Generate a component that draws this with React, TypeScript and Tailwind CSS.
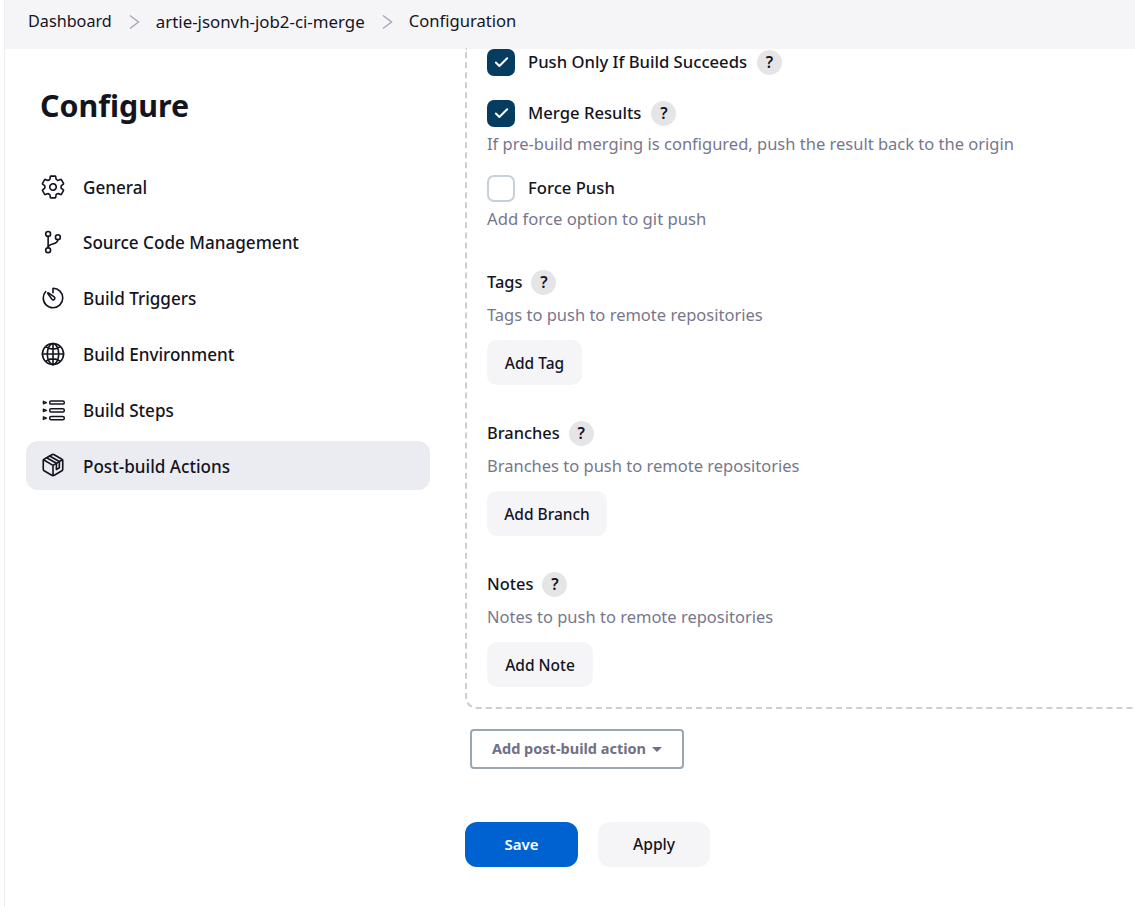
import { Check } from "lucide-react";

const navItems = [
	{
		label: "General",
		icon: (
			<>
				<path d="M262.29 192.31a64 64 0 1057.42 57.42 64.13 64.13 0 00-57.42-57.42zM416.39 256a154.34 154.34 0 01-1.53 20.79l45.21 35.46a10.81 10.81 0 012.45 13.75l-42.77 74a10.81 10.81 0 01-13.14 4.59l-44.9-18.08a16.11 16.11 0 00-15.17 1.75A164.48 164.48 0 01325 400.8a15.94 15.94 0 00-8.82 12.14l-6.73 47.89a11.08 11.08 0 01-10.68 9.17h-85.54a11.11 11.11 0 01-10.69-8.87l-6.72-47.82a16.07 16.07 0 00-9-12.22 155.3 155.3 0 01-21.46-12.57 16 16 0 00-15.11-1.71l-44.89 18.07a10.81 10.81 0 01-13.14-4.58l-42.77-74a10.8 10.8 0 012.45-13.75l38.21-30a16.05 16.05 0 006-14.08c-.36-4.17-.58-8.33-.58-12.5s.21-8.27.58-12.35a16 16 0 00-6.07-13.94l-38.19-30A10.81 10.81 0 0149.48 186l42.77-74a10.81 10.81 0 0113.14-4.59l44.9 18.08a16.11 16.11 0 0015.17-1.75A164.48 164.48 0 01187 111.2a15.94 15.94 0 008.82-12.14l6.73-47.89A11.08 11.08 0 01213.23 42h85.54a11.11 11.11 0 0110.69 8.87l6.72 47.82a16.07 16.07 0 009 12.22 155.3 155.3 0 0121.46 12.57 16 16 0 0015.11 1.71l44.89-18.07a10.81 10.81 0 0113.14 4.58l42.77 74a10.8 10.8 0 01-2.45 13.75l-38.21 30a16.05 16.05 0 00-6.05 14.08c.33 4.14.55 8.3.55 12.47z" />
			</>
		),
	},
	{
		label: "Source Code Management",
		icon: (
			<>
				<circle cx="160" cy="96" r="48" />
				<circle cx="160" cy="416" r="48" />
				<path d="M160 368V144" />
				<circle cx="352" cy="160" r="48" />
				<path d="M352 208c0 128-192 48-192 160" />
			</>
		),
	},
	{
		label: "Build Triggers",
		icon: (
			<>
				<path d="M112.91 128A191.85 191.85 0 0064 254c-1.18 106.35 85.65 193.8 192 194 106.2.2 192-85.83 192-192 0-104.54-83.55-189.61-187.5-192a4.36 4.36 0 00-4.5 4.37V152" />
				<path d="M233.38 278.63l-79-113a8.13 8.13 0 0111.32-11.32l113 79a32.5 32.5 0 01-37.25 53.26 33.21 33.21 0 01-8.07-7.94z" />
			</>
		),
	},
	{
		label: "Build Environment",
		icon: (
			<>
				<path d="M256 48C141.13 48 48 141.13 48 256s93.13 208 208 208 208-93.13 208-208S370.87 48 256 48z" />
				<path d="M256 48c-58.07 0-112.67 93.13-112.67 208S197.93 464 256 464s112.67-93.13 112.67-208S314.07 48 256 48z" />
				<path d="M117.33 117.33c38.24 27.15 86.38 43.34 138.67 43.34s100.43-16.19 138.67-43.34M394.67 394.67c-38.24-27.15-86.38-43.34-138.67-43.34s-100.43 16.19-138.67 43.34M256 48v416M464 256H48" />
			</>
		),
	},
	{
		label: "Build Steps",
		icon: (
			<>
				<rect x="190" y="78" width="288" height="62" rx="28" strokeWidth="30" />
				<rect x="190" y="232" width="288" height="62" rx="28" strokeWidth="30" />
				<rect x="190" y="386" width="288" height="62" rx="28" strokeWidth="30" />
				<path d="M66 84l62 25-62 25zM66 238l62 25-62 25zM66 392l62 25-62 25z" strokeWidth="26" />
			</>
		),
	},
	{
		label: "Post-build Actions",
		active: true,
		icon: (
			<>
				<path d="M448 341.37V170.61A32 32 0 00432.11 143l-152-88.46a47.94 47.94 0 00-48.24 0L79.89 143A32 32 0 0064 170.61v170.76A32 32 0 0079.89 369l152 88.46a48 48 0 0048.24 0l152-88.46A32 32 0 00448 341.37z" />
				<path d="M69 153.99l187 110 187-110M256 463.99v-200" />
				<path d="M189 80L381 188V310L323 344V221L131 113" />
			</>
		),
	},
];

const Chevron = () => (
	<svg viewBox="0 0 24 24" className="mx-[10px] h-[24px] w-[24px]" fill="none" stroke="#a8a8ba" strokeWidth="1.5">
		<path d="M8 5.5L16.5 12L8 18.5" />
	</svg>
);

const HelpBadge = () => (
	<span className="flex h-[25px] w-[25px] items-center justify-center rounded-full bg-[#e5e5e7] text-[16px] font-semibold text-[#14141f]">
		?
	</span>
);

const CheckRow = ({ label, checked }: { label: string; checked?: boolean }) => (
	<div className="flex h-[28px] items-center">
		{checked ? (
			<span className="flex h-[27px] w-[28px] items-center justify-center rounded-[7px] bg-[#063c60]">
				<Check size={17} strokeWidth={2.75} className="text-white" />
			</span>
		) : (
			<span className="h-[27px] w-[28px] rounded-[7px] border-2 border-[#c6d0d6] bg-white" />
		)}
		<span className="ml-[13px] text-[16.65px] font-medium text-[#14141f]">{label}</span>
		{label !== "Force Push" && (
			<span className="ml-[10px]">
				<HelpBadge />
			</span>
		)}
	</div>
);

const RepeatSection = ({ title, hint, button, width }: { title: string; hint: string; button: string; width: string }) => (
	<div>
		<div className="flex h-[26px] items-center gap-[9px]">
			<span className="text-[16.4px] font-medium text-[#14141f]">{title}</span>
			<HelpBadge />
		</div>
		<p className="mt-[7px] h-[26px] text-[16.5px] leading-[26px] text-[#77778c]">{hint}</p>
		<button className={`mt-[12px] h-[45px] rounded-[10px] bg-[#f5f5f8] pt-[2px] text-[15.5px] font-medium text-[#14141f] ${width}`}>
			{button}
		</button>
	</div>
);

export default function App() {
	return (
		<div className="h-[907px] w-[1135px] overflow-hidden bg-white font-['Noto_Sans',sans-serif]">
			<div className="ml-[4px] h-full border-l border-[#ececee]">
				<div className="flex h-[49px] items-center bg-[#f5f5f8] pb-[6px] pl-[23px] text-[#14141f]">
					<span className="text-[16.2px]">Dashboard</span>
					<Chevron />
					<span className="text-[16.85px]">artie-jsonvh-job2-ci-merge</span>
					<Chevron />
					<span className="text-[16.6px]">Configuration</span>
				</div>
				<div className="flex">
					<aside className="w-[460px] shrink-0 pl-[21px]">
						<h1 className="mt-[35px] h-[44px] pl-[14px] text-[30.4px] leading-[44px] font-bold text-[#14141f]">Configure</h1>
						<nav className="mt-[34px] flex w-[404px] flex-col gap-[6.8px]">
							{navItems.map((item) => (
								<div
									key={item.label}
									className={`flex h-[49px] items-center rounded-[12px] pl-[14px] ${item.active ? "bg-[#ebecf1]" : ""}`}
								>
									<svg
										viewBox="0 0 512 512"
										className="h-[26px] w-[26px]"
										fill="none"
										stroke="#14141f"
										strokeWidth="32"
										strokeLinecap="round"
										strokeLinejoin="round"
									>
										{item.icon}
									</svg>
									<span className="ml-[17px] pt-[2px] text-[17.1px] font-medium text-[#14141f]">{item.label}</span>
								</div>
							))}
						</nav>
					</aside>
					<main className="min-w-0 flex-1">
						<div className="-mt-[1px] w-[700px] rounded-bl-[12px] border-b-2 border-l-2 border-dashed border-[#c6d0d6] pb-[20px] pl-[20px]">
							<CheckRow label="Push Only If Build Succeeds" checked />
							<div className="mt-[23px]">
								<CheckRow label="Merge Results" checked />
							</div>
							<p className="mt-[4px] h-[26px] text-[16.5px] leading-[26px] text-[#77778c]">
								If pre-build merging is configured, push the result back to the origin
							</p>
							<div className="mt-[17px]">
								<CheckRow label="Force Push" />
							</div>
							<p className="mt-[4px] h-[26px] text-[16.7px] leading-[26px] text-[#77778c]">Add force option to git push</p>
							<div className="mt-[37px] flex flex-col gap-[35px]">
								<RepeatSection title="Tags" hint="Tags to push to remote repositories" button="Add Tag" width="w-[95px]" />
								<RepeatSection title="Branches" hint="Branches to push to remote repositories" button="Add Branch" width="w-[120px]" />
								<RepeatSection title="Notes" hint="Notes to push to remote repositories" button="Add Note" width="w-[106px]" />
							</div>
						</div>
						<button className="ml-[5px] mt-[20px] flex h-[40px] w-[214px] items-center justify-center gap-[6px] rounded-[4px] border-2 border-[#9aa7b0] bg-white text-[14.5px] font-bold text-[#6f6f85]">
							Add post-build action
							<span className="h-0 w-0 border-x-[5px] border-t-[5px] border-x-transparent border-t-[#6f6f85]" />
						</button>
						<div className="mt-[53px] flex gap-[20px]">
							<button className="h-[45px] w-[113px] rounded-[12px] bg-[#0062d1] text-[15px] font-semibold text-white">Save</button>
							<button className="h-[45px] w-[112px] rounded-[12px] bg-[#f5f5f8] text-[15.7px] font-medium text-[#14141f]">Apply</button>
						</div>
					</main>
				</div>
			</div>
		</div>
	);
}
